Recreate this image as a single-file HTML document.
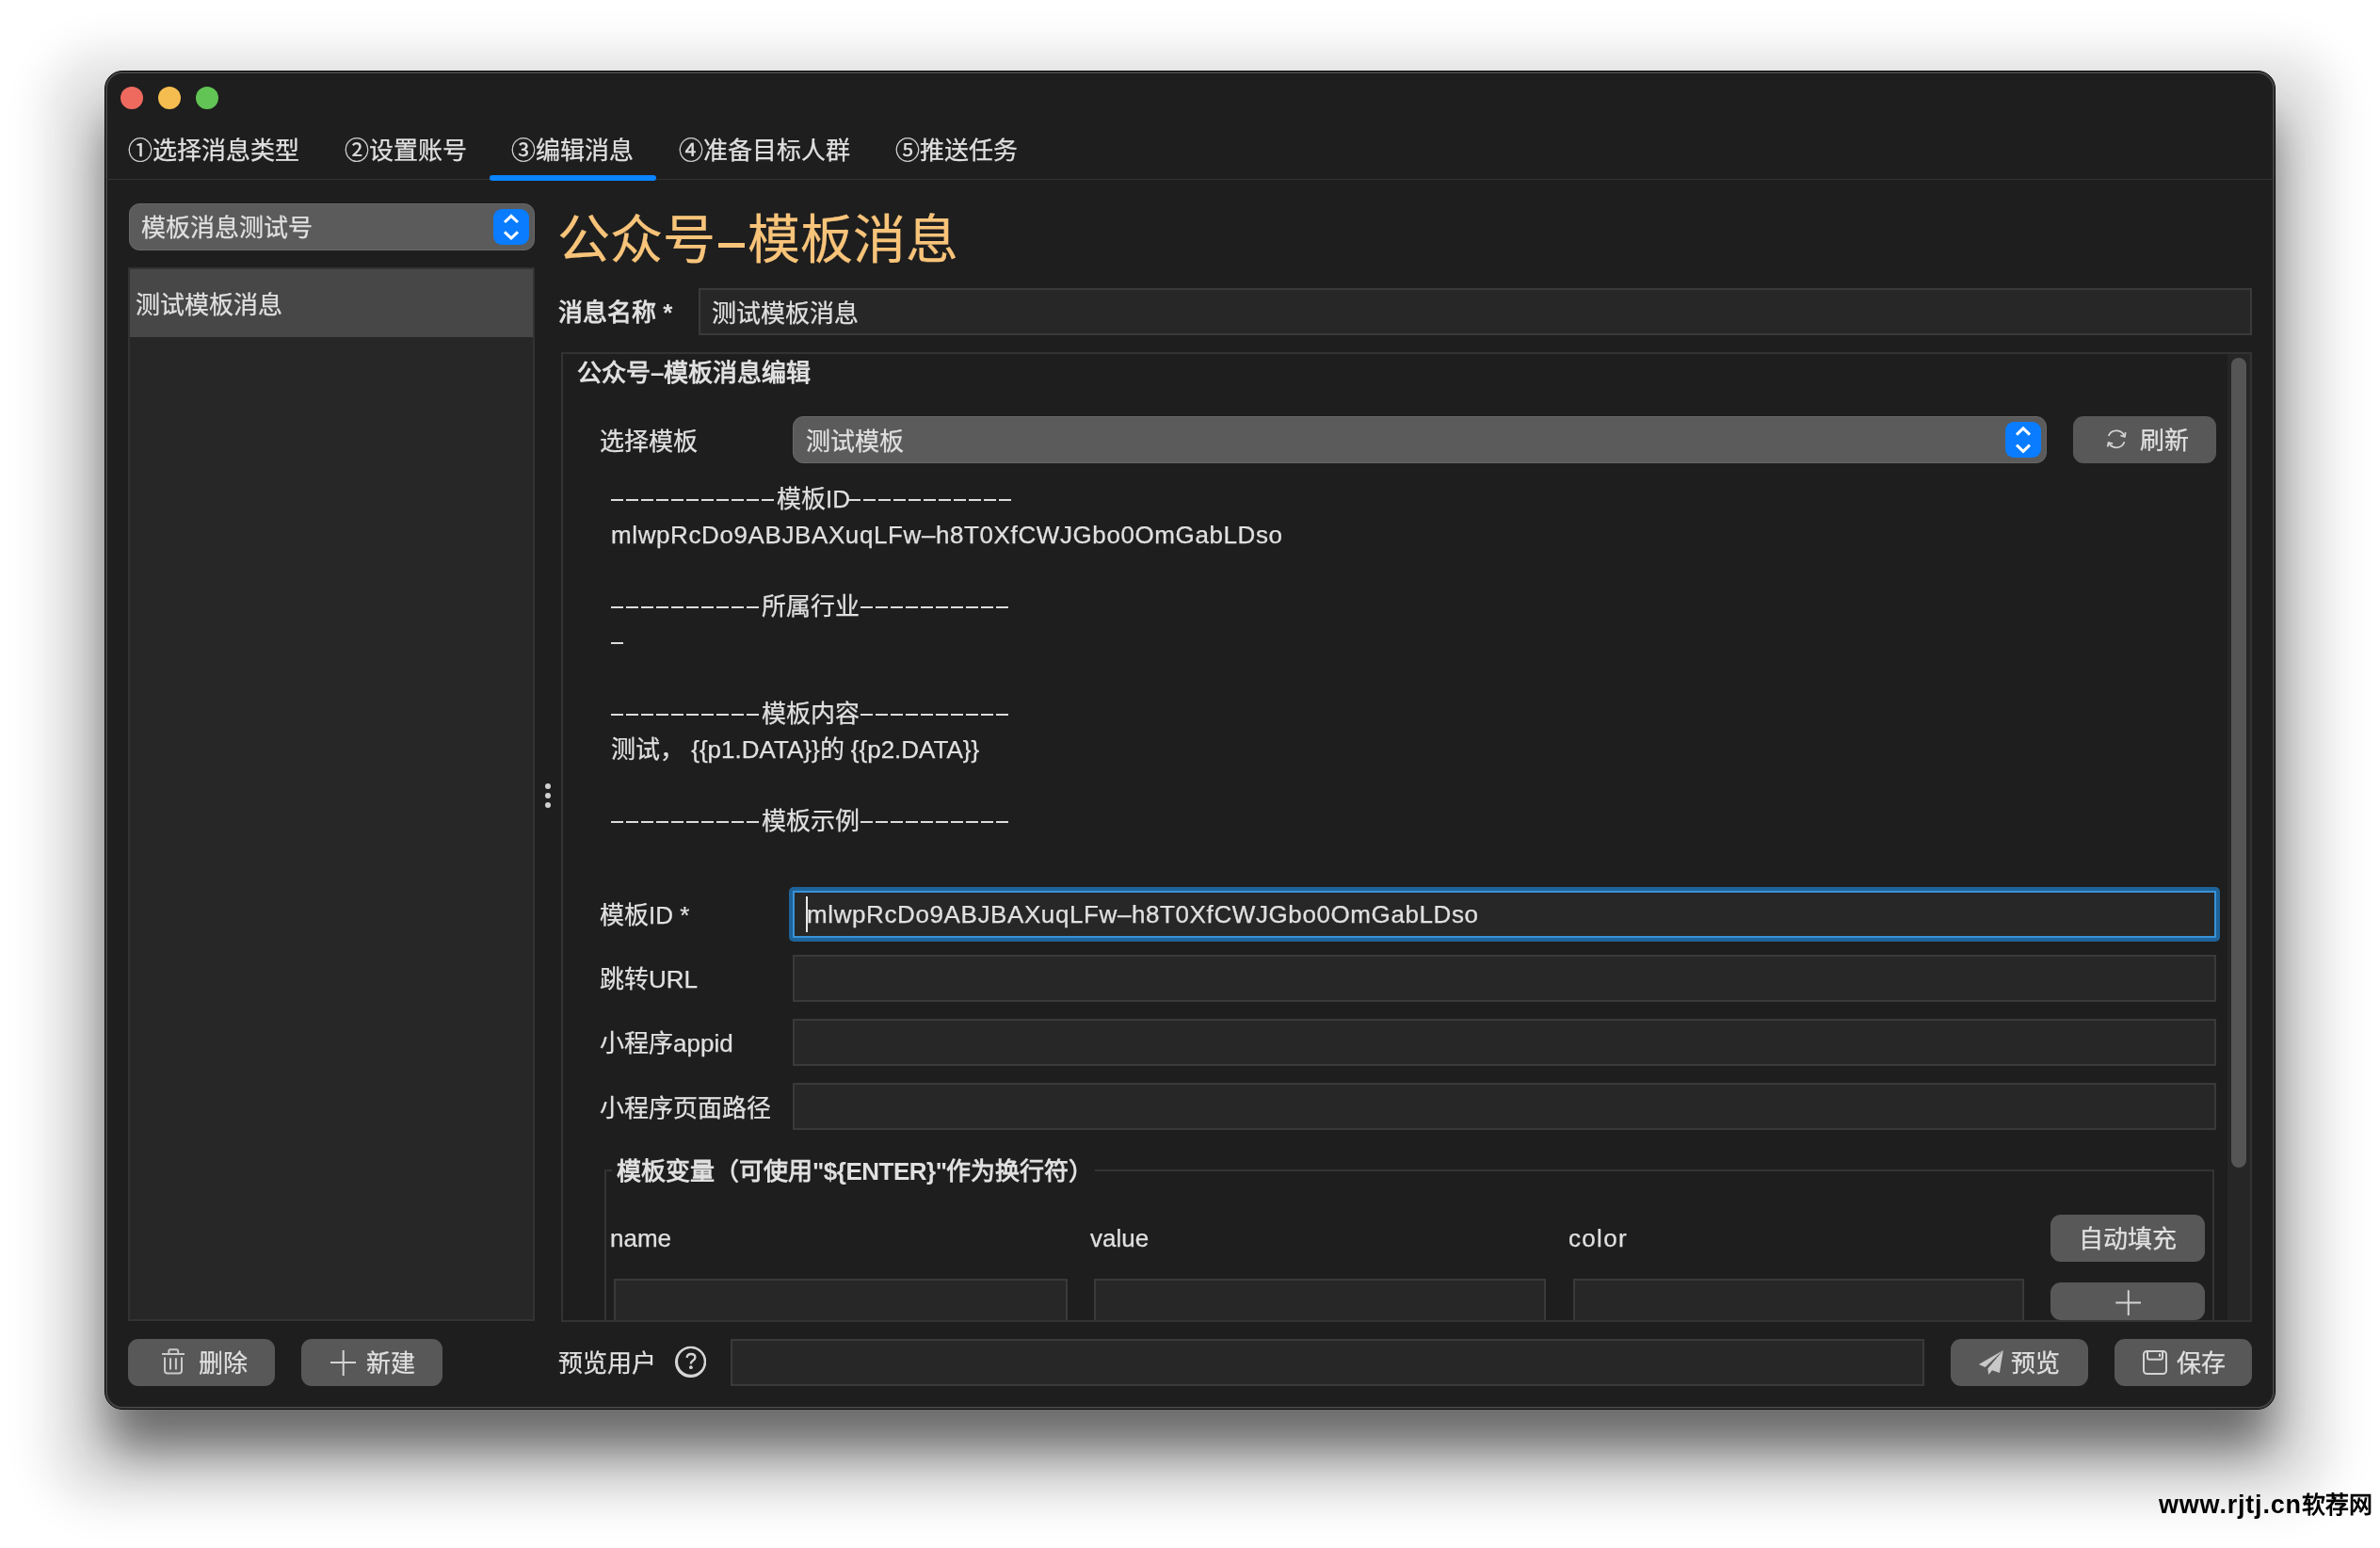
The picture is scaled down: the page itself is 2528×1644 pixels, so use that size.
<!DOCTYPE html>
<html lang="zh-CN"><head><meta charset="utf-8">
<style>
html,body{margin:0;padding:0;width:2528px;height:1644px;overflow:hidden;background:#fff;}
*{box-sizing:border-box;}
body{font-family:"Liberation Sans",sans-serif;color:#e0e0e0;-webkit-text-stroke:0.25px currentColor;font-size:26px;position:relative;}
.a{position:absolute;white-space:nowrap;}
.t,.a{will-change:transform;}
.win{position:absolute;left:111px;top:75px;width:2306px;height:1422px;border-radius:19px;background:#1e1e1e;border:1px solid #000;
 box-shadow:0 46px 54px -1px rgba(0,0,0,0.54), 0 39px 45px 63px rgba(0,0,0,0.1);}
.win:after{content:"";position:absolute;left:0;top:0;right:0;bottom:0;border-radius:18px;border:2px solid #444;pointer-events:none;}
.dot{position:absolute;width:24px;height:24px;border-radius:50%;top:92px;}
.t{position:absolute;white-space:nowrap;line-height:30px;height:30px;}
.btn{position:absolute;background:#585858;border-radius:11px;}
.fld{position:absolute;background:#272727;border:2px solid #3a3a3a;}
.grp{position:absolute;border:2px solid #333;}
.b{font-weight:bold;-webkit-text-stroke:0;}
.lid{letter-spacing:0.6px;}
.dl{display:inline-block;height:2px;vertical-align:middle;position:relative;top:-1px;background:repeating-linear-gradient(90deg,#dcdcdc 0 13px,transparent 13px 16px);}
</style></head><body>
<div class="win"></div>
<div class="dot" style="left:128px;background:#ee6a5f"></div>
<div class="dot" style="left:168px;background:#f5bd4f"></div>
<div class="dot" style="left:208px;background:#61c454"></div>

<!-- tabs -->
<div class="t" style="left:136px;top:145px">①选择消息类型</div>
<div class="t" style="left:366px;top:145px">②设置账号</div>
<div class="t" style="left:543px;top:145px">③编辑消息</div>
<div class="t" style="left:721px;top:145px">④准备目标人群</div>
<div class="t" style="left:951px;top:145px">⑤推送任务</div>
<div class="a" style="left:112px;top:190px;width:2304px;height:1px;background:#333"></div>
<div class="a" style="left:520px;top:186px;width:177px;height:6px;border-radius:3px;background:#0a84ff"></div>

<!-- left combo -->
<div class="btn" style="left:137px;top:216px;width:431px;height:50px;border-radius:11px;border:1.5px solid #686868;background:#5b5b5b"></div>
<div class="a" style="left:524px;top:222px;width:38px;height:38px;border-radius:9px;background:#0a7cff"></div>
<div class="t" style="left:150px;top:227px">模板消息测试号</div>

<!-- list -->
<div class="a" style="left:136px;top:284px;width:432px;height:1119px;background:#272727;border:2px solid #333"></div>
<div class="a" style="left:138px;top:286px;width:428px;height:72px;background:#474747"></div>
<div class="t" style="left:144px;top:309px">测试模板消息</div>

<!-- splitter dots -->
<div class="a" style="left:579px;top:832px;width:6px;height:6px;border-radius:3px;background:#d0d0d0"></div>
<div class="a" style="left:579px;top:842px;width:6px;height:6px;border-radius:3px;background:#d0d0d0"></div>
<div class="a" style="left:579px;top:852px;width:6px;height:6px;border-radius:3px;background:#d0d0d0"></div>

<!-- title -->
<div class="t" style="left:592px;top:225px;font-size:56px;line-height:60px;height:60px;color:#f8c47a">公众号<span style="display:inline-block;width:28px;height:5px;background:#f8c47a;vertical-align:top;margin:33px 3px 0 3px"></span>模板消息</div>
<div class="t b" style="left:593px;top:317px">消息名称 *</div>
<div class="fld" style="left:742px;top:306px;width:1650px;height:50px"></div>
<div class="t" style="left:756px;top:318px">测试模板消息</div>

<!-- group -->
<div class="grp" style="left:596px;top:374px;width:1796px;height:1030px"></div>
<div class="a" style="left:2366px;top:376px;width:24px;height:1026px;background:#262626"></div>
<div class="a" style="left:2370px;top:380px;width:16px;height:860px;border-radius:8px;background:#555"></div>
<div class="t b" style="left:613px;top:381px">公众号–模板消息编辑</div>

<!-- select template -->
<div class="t" style="left:637px;top:454px">选择模板</div>
<div class="btn" style="left:842px;top:442px;width:1332px;height:50px;border:1.5px solid #686868;background:#5b5b5b"></div>
<div class="a" style="left:2130px;top:448px;width:38px;height:38px;border-radius:9px;background:#0a7cff"></div>
<div class="t" style="left:856px;top:454px">测试模板</div>
<div class="btn" style="left:2202px;top:442px;width:152px;height:50px"></div>
<div class="t" style="left:2273px;top:453px">刷新</div>

<!-- info text -->
<div class="a" style="left:649px;top:511px;line-height:38px">
<div style="height:38px"><span class="dl" style="width:176px"></span>模板ID<span class="dl" style="width:176px;margin-left:-2px"></span></div>
<div style="height:38px"><span class="lid">mlwpRcDo9ABJBAXuqLFw–h8T0XfCWJGbo0OmGabLDso</span></div>
<div style="height:38px"></div>
<div style="height:38px"><span class="dl" style="width:160px"></span>所属行业<span class="dl" style="width:160px;margin-left:1px"></span></div>
<div style="height:38px"><span class="dl" style="width:16px"></span></div>
<div style="height:38px"></div>
<div style="height:38px"><span class="dl" style="width:160px"></span>模板内容<span class="dl" style="width:160px;margin-left:1px"></span></div>
<div style="height:38px">测试， {{p1.DATA}}的 {{p2.DATA}}</div>
<div style="height:38px"></div>
<div style="height:38px"><span class="dl" style="width:160px"></span>模板示例<span class="dl" style="width:160px;margin-left:1px"></span></div>
</div>

<!-- form -->
<div class="t" style="left:637px;top:957px">模板ID *</div>
<div class="a" style="left:838px;top:942px;width:1520px;height:58px;border-radius:5px;background:#1e6399"></div>
<div class="a" style="left:842px;top:946px;width:1512px;height:50px;background:#272727;border:2.5px solid #3893d8"></div>
<div class="a" style="left:856px;top:952px;width:2px;height:38px;background:#e8e8e8"></div>
<div class="t" style="left:857px;top:956px"><span class="lid">mlwpRcDo9ABJBAXuqLFw–h8T0XfCWJGbo0OmGabLDso</span></div>

<div class="t" style="left:637px;top:1025px">跳转URL</div>
<div class="fld" style="left:842px;top:1014px;width:1512px;height:50px"></div>
<div class="t" style="left:637px;top:1093px">小程序appid</div>
<div class="fld" style="left:842px;top:1082px;width:1512px;height:50px"></div>
<div class="t" style="left:637px;top:1162px">小程序页面路径</div>
<div class="fld" style="left:842px;top:1150px;width:1512px;height:50px"></div>

<!-- inner group -->
<div class="a" style="left:642px;top:1242px;width:1710px;height:162px;border:2px solid #333;border-bottom:none"></div>
<div class="a" style="left:650px;top:1225px;width:513px;height:36px;background:#1e1e1e"></div>
<div class="t b" style="left:655px;top:1229px">模板变量（可使用<span style="letter-spacing:-0.5px">"${ENTER}"</span>作为换行符）</div>
<div class="t" style="left:648px;top:1300px">name</div>
<div class="t" style="left:1158px;top:1300px">value</div>
<div class="t" style="left:1666px;top:1300px;letter-spacing:1.3px">color</div>
<div class="fld" style="left:652px;top:1358px;width:482px;height:50px"></div>
<div class="fld" style="left:1162px;top:1358px;width:480px;height:50px"></div>
<div class="fld" style="left:1671px;top:1358px;width:479px;height:50px"></div>
<div class="btn" style="left:2178px;top:1290px;width:164px;height:50px"></div>
<div class="t" style="left:2208px;top:1301px">自动填充</div>
<div class="btn" style="left:2178px;top:1362px;width:164px;height:40px"></div>
<!-- cover below group bottom -->
<div class="a" style="left:597px;top:1404px;width:1796px;height:16px;background:#1e1e1e"></div>
<div class="a" style="left:596px;top:1402px;width:1796px;height:2px;background:#333"></div>

<!-- bottom bar -->
<div class="btn" style="left:136px;top:1422px;width:156px;height:50px"></div>
<div class="t" style="left:211px;top:1433px">删除</div>
<div class="btn" style="left:320px;top:1422px;width:150px;height:50px"></div>
<div class="t" style="left:389px;top:1433px">新建</div>
<div class="t" style="left:593px;top:1433px">预览用户</div>
<div class="a" style="left:717px;top:1430px;width:33px;height:33px;border-radius:50%;border:2px solid #ddd"></div>
<div class="fld" style="left:776px;top:1422px;width:1268px;height:50px"></div>
<div class="btn" style="left:2072px;top:1422px;width:146px;height:50px"></div>
<div class="t" style="left:2136px;top:1433px">预览</div>
<div class="btn" style="left:2246px;top:1422px;width:146px;height:50px"></div>
<div class="t" style="left:2312px;top:1433px">保存</div>


<!-- icons -->
<svg class="a" style="left:0;top:0" width="2528" height="1644" viewBox="0 0 2528 1644">
 <g fill="none" stroke="#fff" stroke-width="3" stroke-linecap="butt" stroke-linejoin="miter">
  <path d="M536 236 L543 229.3 L550 236"/>
  <path d="M536 246.3 L543 253 L550 246.3"/>
  <path d="M2142 461.6 L2149 454.9 L2156 461.6"/>
  <path d="M2142 472.6 L2149 479.3 L2156 472.6"/>
 </g>
 <g fill="none" stroke="#d4d4d4" stroke-width="2">
  <!-- refresh -->
  <path d="M2239.66 462.93 A9 9 0 0 1 2256.6 463.67" stroke-width="1.8"/>
  <path d="M2252.3 462.5 L2256.8 463.8 L2257.7 459.2" stroke-width="1.8"/>
  <path d="M2256.5 469.23 A9 9 0 0 1 2239.78 469.96" stroke-width="1.8"/>
  <path d="M2244.1 471.2 L2239.6 470.0 L2238.7 474.5" stroke-width="1.8"/>
  <!-- trash -->
  <g stroke="#cacaca">
  <path d="M172 1438 H196"/>
  <path d="M179.3 1437.5 V1435 Q179.3 1433.3 181 1433.3 H187.5 Q189.2 1433.3 189.2 1435 V1437.5"/>
  <path d="M175 1441.5 V1455.5 Q175 1458.5 178 1458.5 H190 Q193 1458.5 193 1455.5 V1441.5"/>
  <path d="M181 1442.3 V1454.5 M186.9 1442.3 V1454.5"/>
  </g>
  <!-- plus new -->
  <path d="M364.7 1434 V1461 M351 1447 H378"/>
  <!-- plus table -->
  <path d="M2260.8 1370.3 V1397 M2247.3 1383.4 H2274"/>
  <!-- question -->
  <circle cx="733.9" cy="1445.9" r="15" stroke-width="2.3"/>
  <path d="M729.6 1441.8 Q730 1438 734 1438 Q738.4 1438 738.4 1441.6 Q738.4 1443.6 736 1445 Q733.8 1446.3 733.8 1448.5" stroke-width="2.4"/>
  <!-- save -->
  <rect x="2277" y="1435" width="24" height="24" rx="3.5"/>
  <path d="M2281 1435.5 V1441.5 Q2281 1443.8 2283.3 1443.8 H2294.7 Q2297 1443.8 2297 1441.5 V1435.5"/>
  <path d="M2294 1437.5 V1441"/>
 </g>
 <circle cx="733.9" cy="1452.2" r="1.9" fill="#d4d4d4"/>
 <g fill="#c8c8c8">
  <path d="M2101.9 1448.9 L2127.7 1434 L2108.6 1452 Z"/>
  <path d="M2127.9 1433.8 L2123.9 1457.9 L2116 1455.2 L2112.2 1459.9 L2111.4 1453.4 Z"/>
 </g>
</svg>

<!-- watermark -->
<div class="t b" style="left:2293px;top:1583px;color:#000;font-size:27px;-webkit-text-stroke:0"><span style="letter-spacing:0.8px">www.rjtj.cn</span><span style="font-size:25px">软荐网</span></div>
</body></html>
